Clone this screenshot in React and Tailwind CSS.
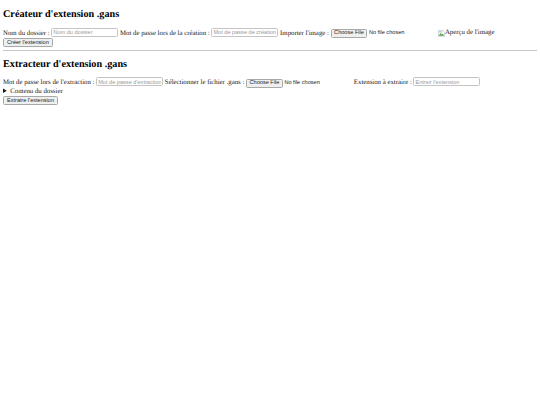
export default function App() {
  const field = "h-[9px] w-[67px] rounded-[1.5px] border border-[#c4c4c4] px-[1px] align-baseline font-['Liberation_Sans',sans-serif] text-[5.6px] leading-none outline-none placeholder:text-[#999999]";
  const btn = "block h-[9px] rounded-[1.5px] border border-[#a8a8a8] bg-[#efefef] px-[3px] font-['Liberation_Sans',sans-serif] text-[5.6px] leading-none text-[#222222]";
  const fileBtn = "inline-block h-[9px] rounded-[1.5px] border border-[#a8a8a8] bg-[#efefef] px-[2.5px] align-baseline font-['Liberation_Sans',sans-serif] text-[5.6px] leading-[7px] text-[#222222]";
  const noFile = "ml-[1.5px] font-['Liberation_Sans',sans-serif] text-[5.6px] text-[#222222]";

  return (
    <div className="min-h-[405px] bg-white px-[3px] font-['Liberation_Serif',serif] text-[6.8px] leading-[8.3px] text-[#1a1a1a] [text-rendering:geometricPrecision]">
      <h2 className="pt-[8.5px] text-[10.2px] leading-[12.5px] font-bold text-black">Créateur d'extension .gans</h2>
      <div className="mt-[6.5px] whitespace-nowrap">
        <label>Nom du dossier : </label>
        <input className={field} placeholder="Nom du dossier" />
        <label> Mot de passe lors de la création : </label>
        <input className={field} placeholder="Mot de passe de création" />
        <label> Importer l'image : </label>
        <span className={fileBtn}>Choose File</span>
        <span className={noFile}>No file chosen</span>
        <span className="ml-[33.5px] inline-flex items-baseline">
          <svg width="7" height="7" viewBox="0 0 16 16" className="self-center">
            <path d="M1 1h10l4 4v10H1z" fill="#fff" stroke="#a0a0a0" />
            <path d="M2 12l4-5 3 3 2-2 3 5H2z" fill="#5aa34a" />
            <path d="M2 2h8v4H2z" fill="#bcd3f2" />
          </svg>
          Aperçu de l'image
        </span>
      </div>
      <button className={btn}>Créer l'extension</button>
      <hr className="mt-[2.5px] border-t border-[#c8c8c8]" />
      <h2 className="mt-[8px] text-[10.2px] leading-[12.5px] font-bold text-black">Extracteur d'extension .gans</h2>
      <div className="mt-[6px] whitespace-nowrap">
        <label>Mot de passe lors de l'extraction : </label>
        <input className={field} placeholder="Mot de passe d'extraction" />
        <label> Sélectionner le fichier .gans : </label>
        <span className={fileBtn}>Choose File</span>
        <span className={noFile}>No file chosen</span>
        <label className="ml-[34px]">Extension à extraire : </label>
        <input className={field} placeholder="Entrez l'extension" />
      </div>
      <details>
        <summary>Contenu du dossier</summary>
      </details>
      <button className={btn}>Extraire l'extension</button>
    </div>
  );
}
